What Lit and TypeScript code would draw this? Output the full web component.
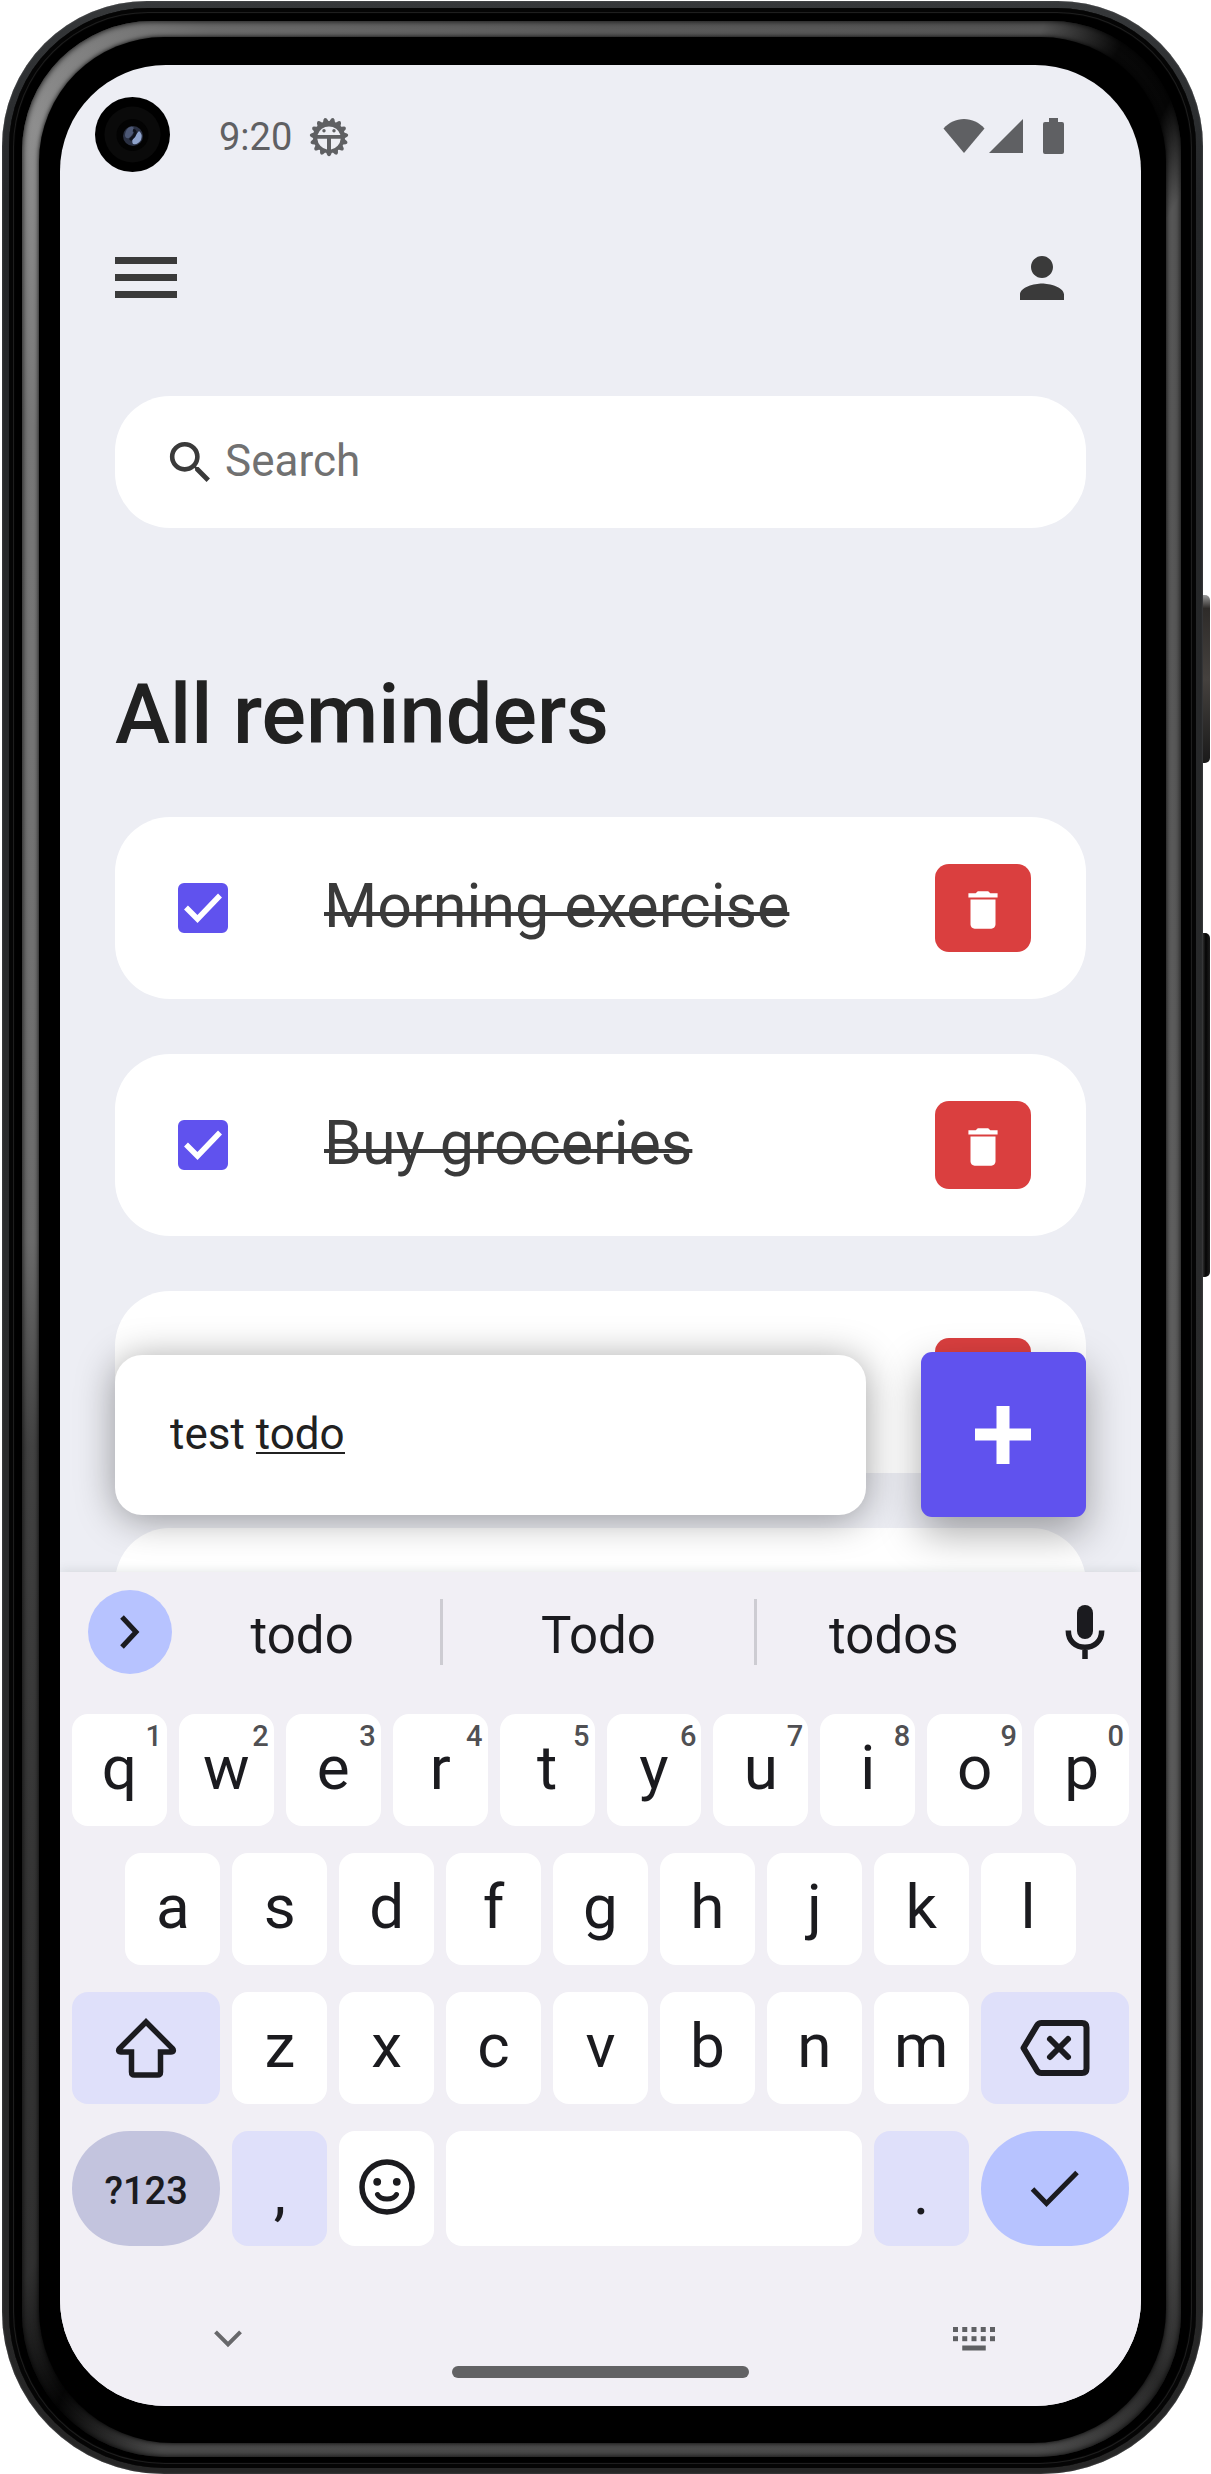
import { LitElement, html, css, svg, nothing } from "lit";
import { customElement, property, state } from "lit/decorators.js";
import { classMap } from "lit/directives/class-map.js";

interface Reminder {
  id: number;
  title: string;
  done: boolean;
}

interface Key {
  label: string;
  span: number;
  start?: number;
  hint?: string;
  name?: string;
  tone?: "soft" | "muted" | "strong";
  shape?: "pill";
  kind?: "punct" | "mode";
}

/* Rounded teeth around the status bar bug badge. */
const teeth = Array.from({ length: 15 }, (_, i) => i * 24 + 12);

const icons = {
  bug: svg`<svg viewBox="0 0 40 40" width="40" height="40" fill="#5f6063" aria-hidden="true">
    ${teeth.map((a) => svg`<path d="M16.500 6L18.300 1.800Q20 -.4 21.700 1.800L23.500 6z" transform="rotate(${a} 20 20)"></path>`)}
    <path fill-rule="evenodd" d="M20 4a16 16 0 1 0 0 32a16 16 0 1 0 0-32zM8.500 18a12 12 0 0 1 23 0zM8.300 21.800h9.700v10.800a12 12 0 0 1-9.700-10.800zM22 21.800h9.700a12 12 0 0 1-9.700 10.800z"></path>
    <circle cx="15" cy="13.800" r="1.700"></circle><circle cx="25" cy="13.800" r="1.700"></circle>
  </svg>`,
  wifi: svg`<svg viewBox="0 0 42 36" width="42" height="36" fill="#5f6063" aria-hidden="true"><path d="M.5 10.500C6 4.500 13 1 21 1s15 3.500 20.500 9.500L21 35z"></path></svg>`,
  signal: svg`<svg viewBox="0 0 34 36" width="34" height="36" fill="#5f6063" aria-hidden="true"><path d="M34 1v34H0z"></path></svg>`,
  battery: svg`<svg viewBox="0 0 21 36" width="21" height="36" fill="#5f6063" aria-hidden="true"><path d="M6 0h9v4h4a2 2 0 0 1 2 2v28a2 2 0 0 1-2 2H2a2 2 0 0 1-2-2V6a2 2 0 0 1 2-2h4z"></path></svg>`,
  menu: svg`<svg viewBox="0 0 62 42" width="62" height="42" fill="#3a3a3a" aria-hidden="true"><path d="M0 0h62v7H0zM0 17h62v7H0zM0 34h62v7H0z"></path></svg>`,
  person: svg`<svg viewBox="0 0 24 24" width="66" height="66" fill="#3a3a3a" aria-hidden="true"><path d="M12 12c2.210 0 4-1.790 4-4s-1.790-4-4-4-4 1.790-4 4 1.790 4 4 4zm0 2c-2.670 0-8 1.340-8 4v2h16v-2c0-2.660-5.330-4-8-4z"></path></svg>`,
  search: svg`<svg viewBox="0 0 24 24" width="55" height="55" fill="#3a3a3a" aria-hidden="true"><path d="M15.500 14h-.79l-.28-.27A6.471 6.471 0 0 0 16 9.500 6.500 6.500 0 1 0 9.500 16c1.610 0 3.090-.59 4.230-1.570l.27.28v.79l5 4.990L20.490 19l-4.990-5zm-6 0C7.010 14 5 11.990 5 9.500S7.010 5 9.500 5 14 7.010 14 9.500 11.990 14 9.500 14z"></path></svg>`,
  trash: svg`<svg viewBox="0 0 24 24" width="50" height="50" fill="#fff" aria-hidden="true"><path d="M6 19c0 1.100.9 2 2 2h8c1.100 0 2-.9 2-2V7H6v12zM19 4h-3.500l-1-1h-5l-1 1H5v2h14V4z"></path></svg>`,
  plus: svg`<svg viewBox="0 0 56 58" width="56" height="58" fill="#fff" aria-hidden="true"><path d="M21.500 0h13v22.500H56v12H34.500V58h-13V34.500H0v-12h21.500z"></path></svg>`,
  next: svg`<svg viewBox="0 0 24 40" width="24" height="40" fill="none" stroke="#1b1b1f" stroke-width="5" aria-hidden="true"><path d="M4 5l14 15L4 35"></path></svg>`,
  mic: svg`<svg viewBox="0 0 40 54" width="40" height="54" aria-hidden="true"><rect x="12" y="0" width="16" height="34" rx="8" fill="#1b1b1f"></rect><path d="M3.300 25.500c0 11 7.500 16.800 16.700 16.800s16.700-5.800 16.700-16.800M20 42v12" fill="none" stroke="#1b1b1f" stroke-width="5.500"></path></svg>`,
  shift: svg`<svg viewBox="0 0 64 62" width="64" height="62" fill="none" stroke="#1b1b1f" stroke-width="5.500" stroke-linejoin="miter" aria-hidden="true"><path d="M32 5L5.500 31.500C4 33.500 4.500 35 7 35H17.500V55Q17.500 58 20.500 58H43.500Q46.500 58 46.500 55V35H57C59.500 35 60 33.500 58.500 31.500z"></path></svg>`,
  backspace: svg`<svg viewBox="0 0 70 56" width="70" height="56" fill="none" stroke="#1b1b1f" stroke-width="6" stroke-linejoin="round" stroke-linecap="round" aria-hidden="true"><path d="M3.500 28L17 5.500Q18.500 3 21.500 3H62Q66.500 3 66.500 7.500V48.500Q66.500 53 62 53H21.500Q18.500 53 17 50.500z"></path><path d="M30 19l18 18M48 19L30 37"></path></svg>`,
  smile: svg`<svg viewBox="0 0 56 56" width="56" height="56" fill="none" stroke="#1b1b1f" stroke-width="5.500" stroke-linecap="round" aria-hidden="true"><circle cx="28" cy="28" r="25"></circle><circle cx="18.200" cy="22.800" r="3.900" fill="#1b1b1f" stroke="none"></circle><circle cx="37.800" cy="22.800" r="3.900" fill="#1b1b1f" stroke="none"></circle><path d="M18.500 35.500Q21 40 28 40T37.500 35.500" stroke-width="5"></path></svg>`,
  enter: svg`<svg viewBox="0 0 50 38" width="50" height="38" fill="none" stroke="#1b1b1f" stroke-width="5" aria-hidden="true"><path d="M2.500 19L16.500 33.500L47 2.500"></path></svg>`,
  collapse: svg`<svg viewBox="0 0 28 18" width="28" height="18" fill="none" stroke="#68686b" stroke-width="4" aria-hidden="true"><path d="M1.500 1.800L14 14.500L26.500 1.800"></path></svg>`,
  keyboard: svg`<svg viewBox="0 0 42 24" width="42" height="24" fill="#5f6063" aria-hidden="true">${[0, 9.25, 18.5, 27.75, 37].map(
    (x) => svg`<rect x="${x}" y="0" width="5" height="5"></rect><rect x="${x}" y="9.200" width="5" height="5"></rect>`,
  )}<rect x="9.250" y="18.500" width="23.500" height="5"></rect></svg>`,
};

/* Every row is laid on a grid of twenty half-key columns. */
const keys: Key[] = [
  ..."qwertyuiop".split("").map((label, i) => ({ label, span: 2, hint: String((i + 1) % 10) })),
  ..."asdfghjkl".split("").map((label, i) => ({ label, span: 2, start: i === 0 ? 2 : undefined })),
  { label: "shift", name: "Shift", span: 3, start: 1, tone: "soft" },
  ..."zxcvbnm".split("").map((label) => ({ label, span: 2 })),
  { label: "backspace", name: "Backspace", span: 3, tone: "soft" },
  { label: "?123", span: 3, tone: "muted", shape: "pill", kind: "mode" },
  { label: ",", span: 2, tone: "soft", kind: "punct" },
  { label: "smile", name: "Emoji", span: 2 },
  { label: "", name: "Space", span: 8 },
  { label: ".", span: 2, tone: "soft", kind: "punct" },
  { label: "enter", name: "Done", span: 3, tone: "strong", shape: "pill" },
];

const base = css`
  *, *::before, *::after { box-sizing: border-box; }
  button { font: inherit; color: inherit; border: 0; padding: 0; background: none; cursor: pointer; }
  svg { display: block; flex: none; }
`;

@customElement("reminder-item")
class ReminderItem extends LitElement {
  @property({ attribute: false }) item!: Reminder;

  static styles = [
    base,
    css`
      :host { display: block; }
      .card {
        display: flex;
        align-items: center;
        height: 182px;
        padding: 0 55px 0 63px;
        border-radius: 55px;
        background: #fff;
      }
      .tick {
        appearance: none;
        flex: none;
        width: 50px;
        height: 50px;
        margin: 0;
        border: 4px solid #6052ee;
        border-radius: 6px;
      }
      .tick:checked {
        background: #6052ee
          url("data:image/svg+xml,%3Csvg xmlns='http://www.w3.org/2000/svg' viewBox='0 0 42 42'%3E%3Cpath d='M4 20.500L15.500 32L38 8.500' fill='none' stroke='%23fff' stroke-width='5.500'/%3E%3C/svg%3E")
          center / 42px 42px no-repeat;
      }
      .title {
        flex: 1;
        margin-left: 96px;
        padding-bottom: 4px;
        font-size: 61px;
        line-height: 72px;
        color: #3a3a3a;
      }
      /* The strike sits a little below the font's own line-through position. */
      .title.done {
        text-decoration: underline 4px;
        text-underline-offset: -15px;
        text-decoration-skip-ink: none;
      }
      .remove {
        display: flex;
        align-items: center;
        justify-content: center;
        width: 96px;
        height: 88px;
        padding-top: 4px;
        border-radius: 14px;
        background: #da3f3f;
      }
    `,
  ];

  private emit(type: string) {
    this.dispatchEvent(new CustomEvent(type, { detail: this.item.id }));
  }

  render() {
    const { title, done } = this.item;
    return html`<div class="card">
      <input class="tick" id="tick" type="checkbox" .checked=${done} @change=${() => this.emit("toggle")} />
      <label for="tick" class=${classMap({ title: true, done })}>${title}</label>
      <button class="remove" aria-label="Delete reminder" @click=${() => this.emit("remove")}>${icons.trash}</button>
    </div>`;
  }
}

@customElement("soft-keyboard")
class SoftKeyboard extends LitElement {
  static styles = [
    base,
    css`
      :host { display: block; color: #1b1b1f; background: #f1eff5; }
      .suggestions {
        display: grid;
        grid-template-columns: 84px 268fr 3px 310fr 3px 274fr 108px;
        align-items: center;
        padding: 18px 2px 0 28px;
      }
      .more {
        display: flex;
        align-items: center;
        justify-content: center;
        height: 84px;
        border-radius: 50%;
        background: #b7c3ff;
      }
      .word { font-size: 51px; line-height: 60px; padding-top: 8px; }
      .more + .word { padding-right: 8px; }
      .rule { height: 66px; background: #cdccd2; }
      .voice { display: flex; justify-content: center; }
      .keys {
        display: grid;
        grid-template-columns: repeat(20, 1fr);
        grid-template-rows: 112px 112px 112px 115px;
        gap: 27px 12px;
        padding: 40px 12px 0;
      }
      .key {
        position: relative;
        display: flex;
        align-items: center;
        justify-content: center;
        min-width: 0;
        padding-bottom: 4px;
        border-radius: 16px;
        background: #fff;
        font-size: 62px;
        line-height: 72px;
      }
      .span2 { grid-column-end: span 2; }
      .span3 { grid-column-end: span 3; padding-bottom: 0; }
      .span8 { grid-column-end: span 8; }
      .start1 { grid-column-start: 1; }
      .start2 { grid-column-start: 2; }
      .soft { background: #dfe0fa; }
      .muted { background: #c3c4de; }
      .strong { background: #b7c3ff; }
      .pill { border-radius: 58px; }
      .punct { padding: 8px 0 0; }
      .mode { padding-top: 4px; font-size: 38px; font-weight: 500; }
      .hint {
        position: absolute;
        top: 7px;
        right: 5px;
        font-size: 29px;
        line-height: 30px;
        font-weight: 500;
        color: #505053;
      }
      .nav {
        display: flex;
        align-items: center;
        justify-content: space-between;
        height: 28px;
        margin-top: 79px;
        padding: 0 146px 0 154px;
      }
      .handle { width: 297px; height: 12px; margin: 13px auto 0; border-radius: 6px; background: #626264; }
      .end { height: 28px; }
    `,
  ];

  private renderKey(k: Key) {
    const classes = {
      key: true,
      [`span${k.span}`]: true,
      start1: k.start === 1,
      start2: k.start === 2,
      soft: k.tone === "soft",
      muted: k.tone === "muted",
      strong: k.tone === "strong",
      pill: k.shape === "pill",
      punct: k.kind === "punct",
      mode: k.kind === "mode",
    };
    const face = k.name ? (icons as Record<string, unknown>)[k.label] ?? nothing : k.label;
    return html`<button class=${classMap(classes)} aria-label=${k.name ?? nothing}>
      ${face}${k.hint ? html`<span class="hint">${k.hint}</span>` : nothing}
    </button>`;
  }

  render() {
    return html`
      <div class="suggestions">
        <button class="more" aria-label="More tools">${icons.next}</button>
        <button class="word">todo</button>
        <span class="rule"></span>
        <button class="word">Todo</button>
        <span class="rule"></span>
        <button class="word">todos</button>
        <button class="voice" aria-label="Voice input">${icons.mic}</button>
      </div>
      <div class="keys">${keys.map((k) => this.renderKey(k))}</div>
      <div class="nav">
        <button aria-label="Hide keyboard">${icons.collapse}</button>
        <button aria-label="Switch keyboard">${icons.keyboard}</button>
      </div>
      <div class="handle"></div>
      <div class="end"></div>
    `;
  }
}

@customElement("app-root")
class AppRoot extends LitElement {
  @state() private reminders: Reminder[] = [
    { id: 1, title: "Morning exercise", done: true },
    { id: 2, title: "Buy groceries", done: true },
    { id: 3, title: "Check work", done: false },
    { id: 4, title: "", done: false },
  ];

  @state() private draft = "test todo";

  static styles = [
    base,
    css`
      :host {
        display: block;
        box-sizing: border-box;
        height: 100vh;
        min-height: 1800px;
        padding: 1px 8px 0 2px;
        overflow: hidden;
        background: #fff;
        font-family: Roboto, sans-serif;
      }
      .phone { position: relative; height: 100%; }
      .side {
        position: absolute;
        left: 100%;
        width: 7px;
        border-radius: 0 5px 5px 0;
        background: linear-gradient(90deg, #2a2a2a, #050505 40%, #1c1c1c);
      }
      .power { top: 24%; height: 6.8%; background: linear-gradient(#9a9a9a, #2e2b29 8%, #45413e 50%, #1a1a1a); }
      .volume { top: 37.7%; height: 13.9%; }
      .shell {
        height: 100%;
        padding: 7px 7px 6px;
        border-radius: 145px 145px 162px 162px;
        background: linear-gradient(#36383a, #242628 8%, #2a2b2c 50%, #262626);
        box-shadow: inset 0 0 2px #5c5d5f;
      }
      .rim {
        height: 100%;
        padding: 13px 15px 11px 13px;
        border-radius: 139px 139px 156px 156px;
        background: #000;
        box-shadow: inset 0 0 0 4px #050505, inset 0 0 1px 5px #222;
      }
      .gloss {
        height: 100%;
        padding: 16px 15px 14px 17px;
        border-radius: 130px 130px 144px 144px;
        background: conic-gradient(
          #5a5a5a 0deg, #545454 20deg, #080808 23.5deg, #060606 26.5deg, #565656 29deg,
          #5f5f5f 90deg, #585858 148deg, #2a2a2a 154deg, #4c4c4c 160deg,
          #4a4a4a 200deg, #060606 205deg, #303030 209deg, #424242 250deg,
          #6b6b6b 270deg, #777 325deg, #8e8e8e 333deg, #6a6a6a 342deg, #5a5a5a 360deg
        );
        box-shadow: inset 0 0 6px #000;
      }
      .glass {
        height: 100%;
        padding: 28px 25px 37px 21px;
        border-radius: 125px 125px 134px 134px;
        background: #000;
        box-shadow: 0 0 5px #000;
      }
      .screen {
        position: relative;
        display: flex;
        flex-direction: column;
        height: 100%;
        overflow: hidden;
        border-radius: 106px;
        background: #edeef4;
      }
      .camera {
        position: absolute;
        z-index: 3;
        top: 32px;
        left: 35px;
        width: 75px;
        height: 75px;
      }
      .app { position: relative; flex: 1; min-height: 0; overflow: hidden; }
      .status {
        display: flex;
        align-items: center;
        height: 144px;
        padding: 0 77px 0 159px;
        font-size: 38px;
        line-height: 46px;
        color: #5f6063;
      }
      .bug { margin-left: 17px; }
      .signals { display: flex; align-items: center; gap: 4px; margin-left: auto; padding-bottom: 3px; }
      .battery { margin-left: 16px; }
      .page { padding: 0 55px; }
      .bar { display: flex; align-items: center; justify-content: space-between; height: 138px; padding-right: 11px; }
      .search {
        display: flex;
        align-items: center;
        gap: 7px;
        height: 132px;
        margin-top: 49px;
        padding: 0 48px;
        border-radius: 55px;
        background: #fff;
      }
      .query {
        flex: 1;
        min-width: 0;
        padding: 0 0 2px;
        border: 0;
        outline: 0;
        background: none;
        font: 44px/52px Roboto, sans-serif;
        color: #212121;
      }
      .query::placeholder { color: #717171; opacity: 1; }
      .heading { margin: 137px 0 52px; font-size: 83px; line-height: 100px; font-weight: 500; color: #212121; }
      .list { display: flex; flex-direction: column; gap: 55px; margin: 0; padding: 0; list-style: none; }
      .composer {
        position: absolute;
        z-index: 1;
        right: 55px;
        bottom: 55px;
        left: 55px;
        display: flex;
        align-items: center;
        gap: 55px;
      }
      .draft {
        flex: 1;
        min-width: 0;
        height: 160px;
        padding: 0 55px 2px;
        border: 0;
        outline: 0;
        border-radius: 27px;
        font: 44px/52px Roboto, sans-serif;
        color: #212121;
        background: linear-gradient(#212121, #212121) 141px 97px / 89px 2px no-repeat #fff;
        box-shadow: 0 4px 38px rgba(0, 0, 0, 0.38);
      }
      .add {
        display: flex;
        align-items: center;
        justify-content: center;
        width: 165px;
        height: 165px;
        padding-right: 2px;
        border-radius: 11px;
        background: #6052ee;
        box-shadow: 0 16px 40px rgba(0, 0, 0, 0.34);
      }
      .keyboard { position: relative; z-index: 2; box-shadow: 0 -1px 10px rgba(60, 80, 80, 0.14); }
    `,
  ];

  private toggle(id: number) {
    this.reminders = this.reminders.map((r) => (r.id === id ? { ...r, done: !r.done } : r));
  }

  private remove(id: number) {
    this.reminders = this.reminders.filter((r) => r.id !== id);
  }

  private add() {
    const title = this.draft.trim();
    if (!title) return;
    this.reminders = [{ id: Date.now(), title, done: false }, ...this.reminders];
    this.draft = "";
  }

  private camera() {
    return svg`<svg class="camera" viewBox="0 0 75 75" aria-hidden="true">
      <circle cx="37.500" cy="37.500" r="37.500" fill="#000"></circle>
      <circle cx="37.500" cy="37.500" r="28" fill="#0a0a0a"></circle>
      <circle cx="37.500" cy="38" r="16" fill="#030303"></circle>
      <circle cx="38" cy="39" r="10" fill="#2a3042"></circle>
      <path d="M33 31q4-3 6 0q1 5-5 10q-3 1-4-2q0-5 3-8z" fill="#4d5875"></path>
      <path d="M44 34q4 3 2 9q-3 5-8 4q-2-3 1-7z" fill="#8fa3cc"></path>
      <path d="M38 33q4 1 1 6l-4 4" stroke="#10131c" stroke-width="3" fill="none"></path>
    </svg>`;
  }

  render() {
    return html`<div class="phone">
      <span class="side power"></span>
      <span class="side volume"></span>
      <div class="shell"><div class="rim"><div class="gloss"><div class="glass">
        <div class="screen">
          ${this.camera()}
          <main class="app">
            <div class="status">
              <span>9:20</span>
              <span class="bug">${icons.bug}</span>
              <span class="signals">${icons.wifi}${icons.signal}<span class="battery">${icons.battery}</span></span>
            </div>
            <div class="page">
              <header class="bar">
                <button aria-label="Menu">${icons.menu}</button>
                <button aria-label="Profile">${icons.person}</button>
              </header>
              <label class="search">
                ${icons.search}
                <input class="query" type="search" placeholder="Search" aria-label="Search" />
              </label>
              <h1 class="heading">All reminders</h1>
              <ul class="list">
                ${this.reminders.map(
                  (r) => html`<li>
                    <reminder-item
                      .item=${r}
                      @toggle=${() => this.toggle(r.id)}
                      @remove=${() => this.remove(r.id)}
                    ></reminder-item>
                  </li>`,
                )}
              </ul>
            </div>
            <div class="composer">
              <input
                class="draft"
                type="text"
                aria-label="New reminder"
                .value=${this.draft}
                @input=${(e: Event) => (this.draft = (e.target as HTMLInputElement).value)}
              />
              <button class="add" aria-label="Add reminder" @click=${this.add}>${icons.plus}</button>
            </div>
          </main>
          <soft-keyboard class="keyboard"></soft-keyboard>
        </div>
      </div></div></div></div>
    </div>`;
  }
}
